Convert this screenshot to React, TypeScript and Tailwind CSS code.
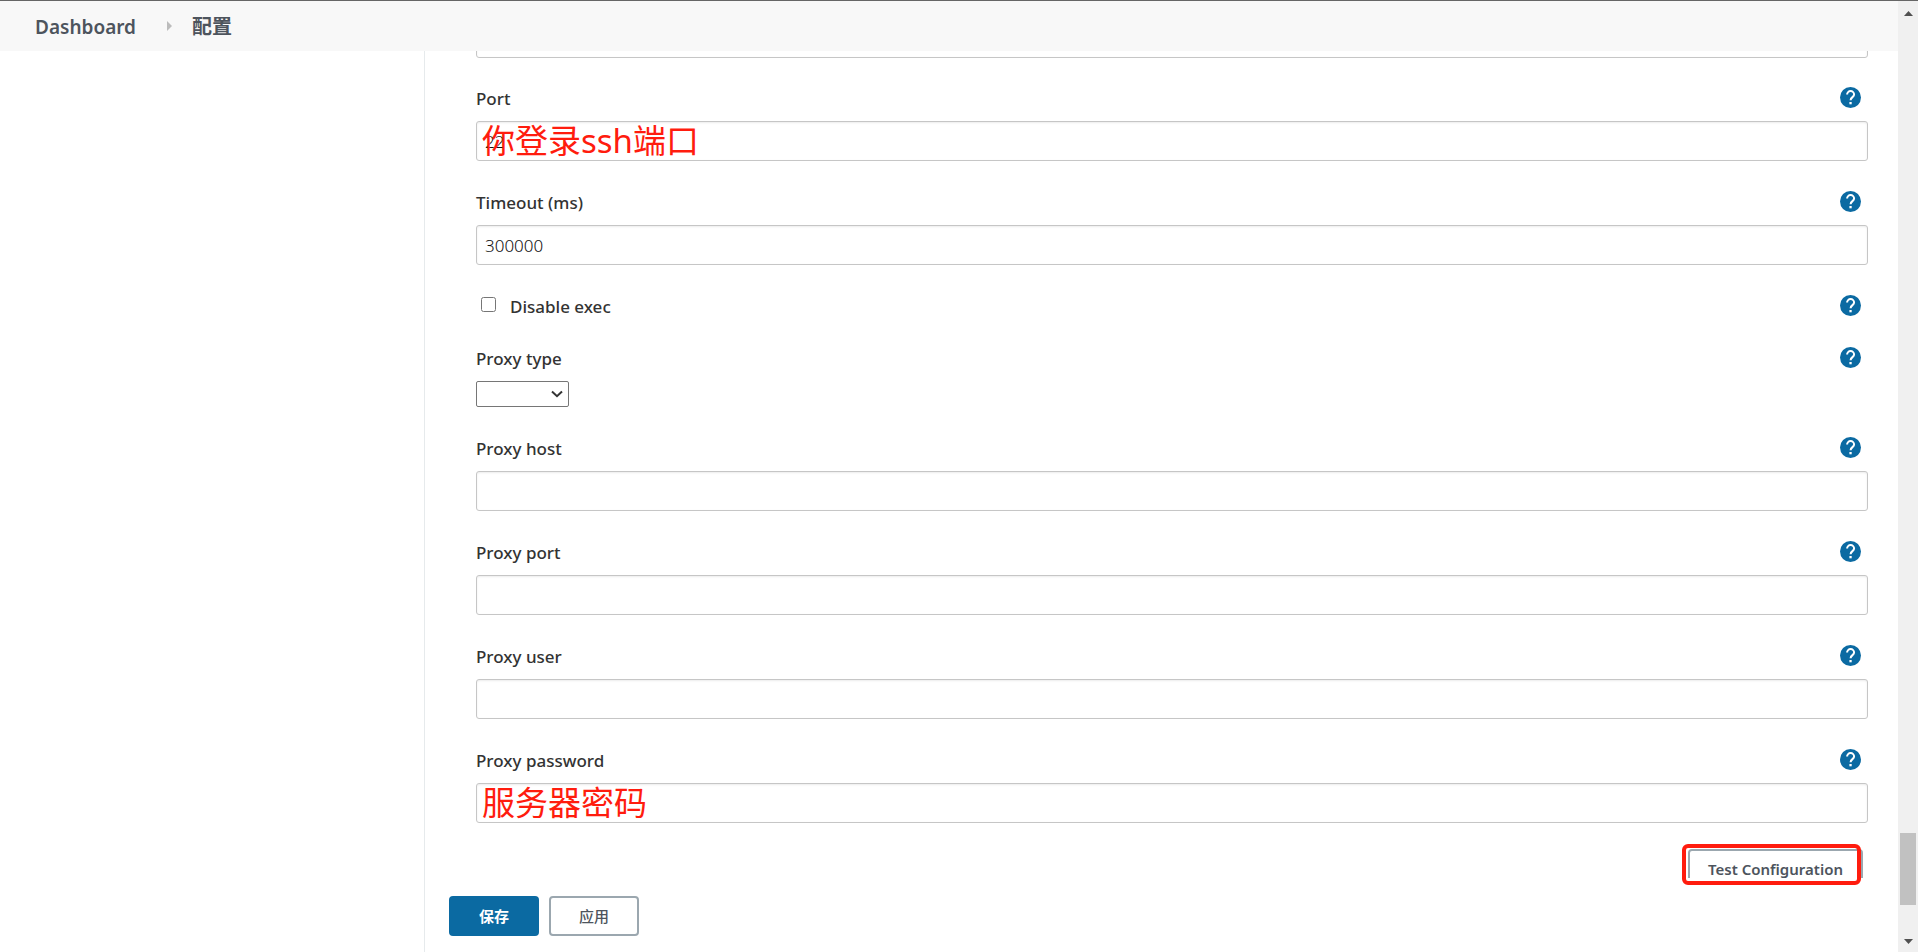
import type { ReactNode } from 'react';

const HelpButton = ({ label }: { label: string }) => (
  <button type="button" aria-label={`Help for feature: ${label}`} className="mr-[7px] h-[21px] w-[21px] shrink-0">
    <svg viewBox="0 0 21 21" className="h-full w-full">
      <circle cx="10.5" cy="10.5" r="10.5" fill="#0b6aa2" />
      <path
        d="M7.1 7.6a3.5 3.5 0 0 1 7 0c0 2.5-3.5 2.6-3.5 5.6"
        fill="none"
        stroke="#fff"
        strokeWidth="2"
      />
      <rect x="9.4" y="15" width="2.3" height="2.3" fill="#fff" />
    </svg>
  </button>
);

const inputClass =
  'block h-10 w-full rounded-[3px] border border-[#c6c6c6] bg-white px-2 text-[17px] font-light text-[#111] shadow-[inset_0_1px_2px_rgba(0,0,0,0.08)] outline-none';

const Field = ({ id, label, children }: { id: string; label: string; children: ReactNode }) => (
  <div className="mb-[30px]">
    <div className="mb-3 flex h-[22px] items-start justify-between">
      <label htmlFor={id} className="text-[17px] leading-6 font-medium text-[#333]">
        {label}
      </label>
      <HelpButton label={label} />
    </div>
    {children}
  </div>
);

type TextFieldProps = { id: string; label: string; value?: string; type?: string; note?: string };

const TextField = ({ id, label, value = '', type = 'text', note }: TextFieldProps) => (
  <Field id={id} label={label}>
    <div className="relative">
      <input id={id} type={type} defaultValue={value} className={inputClass} />
      {note && (
        <span className="pointer-events-none absolute inset-y-0 left-[6px] flex items-center text-[33px] leading-10 whitespace-nowrap text-[#ff1c0e]">
          {note}
        </span>
      )}
    </div>
  </Field>
);

const Breadcrumbs = () => (
  <header className="flex h-[51px] shrink-0 items-center border-t border-[#666] bg-[#f8f8f8] pt-[2px] pl-[35px] text-[19px] font-semibold text-[#4d545d]">
    <a href="#dashboard">Dashboard</a>
    <svg viewBox="0 0 5 10" className="mr-5 mb-[2px] ml-[31px] h-[10px] w-[5px]">
      <path d="M0 0l5 5-5 5z" fill="#bcbcbc" />
    </svg>
    <a href="#configure" className="text-xl">
      配置
    </a>
  </header>
);

const Scrollbar = () => (
  <div className="flex w-5 shrink-0 flex-col items-center border-t border-[#666] bg-[#f0f0f0]">
    <button type="button" aria-label="Scroll up" className="flex h-6 w-full items-center justify-center">
      <svg viewBox="0 0 9 5" className="h-[5px] w-[9px]">
        <path d="M4.5 0L9 5H0z" fill="#505050" />
      </svg>
    </button>
    <div className="flex w-full flex-1 flex-col justify-end px-[2px] pb-[25px]">
      <div className="h-[72px] bg-[#c1c1c1]" />
    </div>
    <button type="button" aria-label="Scroll down" className="flex h-[22px] w-full items-center justify-center">
      <svg viewBox="0 0 9 5" className="h-[5px] w-[9px]">
        <path d="M0 0h9L4.5 5z" fill="#505050" />
      </svg>
    </button>
  </div>
);

const App = () => {
  return (
    <div className="flex h-screen bg-white font-['Noto_Sans','Noto_Sans_CJK_SC',sans-serif]">
      <div className="flex min-w-0 flex-1 flex-col">
        <Breadcrumbs />
        <div className="flex min-h-0 flex-1">
          <aside className="w-[424px] shrink-0" />
          <form
            className="flex min-w-0 flex-1 flex-col border-l border-[#e6eaec]"
            onSubmit={(e) => e.preventDefault()}
          >
            <div className="relative min-h-0 flex-1">
              <div className="h-full overflow-hidden pr-[30px] pl-[51px]">
                {/* Field scrolled under the header */}
                <div className="mb-[29px] flex h-[7px] items-end overflow-hidden">
                  <input aria-label="Jump host" className={`${inputClass} shrink-0`} />
                </div>
                <TextField id="port" label="Port" value="22" note="你登录ssh端口" />
                <TextField id="timeout" label="Timeout (ms)" value="300000" />

                <div className="mb-[30px] flex h-[22px] items-start justify-between">
                  <label className="flex items-start text-[17px] leading-6 font-medium text-[#333]">
                    <input type="checkbox" className="mt-[2px] mr-[14px] ml-[5px] h-[15px] w-[15px]" />
                    Disable exec
                  </label>
                  <HelpButton label="Disable exec" />
                </div>

                <Field id="proxyType" label="Proxy type">
                  <div className="relative w-[93px]">
                    <select
                      id="proxyType"
                      className="block h-[26px] w-full appearance-none rounded-[2px] border border-[#767676] bg-white px-1 text-sm"
                    >
                      <option value=""></option>
                      <option value="http">http</option>
                      <option value="socks4">socks4</option>
                      <option value="socks5">socks5</option>
                    </select>
                    <svg
                      viewBox="0 0 12 8"
                      className="pointer-events-none absolute top-[9px] right-[6px] h-2 w-3"
                    >
                      <path d="M1 1.5l5 4.7 5-4.7" fill="none" stroke="#333" strokeWidth="2" />
                    </svg>
                  </div>
                </Field>

                <TextField id="proxyHost" label="Proxy host" />
                <TextField id="proxyPort" label="Proxy port" />
                <TextField id="proxyUser" label="Proxy user" />
                <TextField id="proxyPassword" label="Proxy password" type="password" note="服务器密码" />

                <div className="-mt-1 flex justify-end pr-[5px]">
                  <button
                    type="button"
                    className="h-10 w-[175px] rounded border-2 border-[#9ba7af] bg-white text-[15px] font-semibold text-[#4d545d]"
                  >
                    Test Configuration
                  </button>
                </div>
              </div>
              {/* Highlight around the test button */}
              <div className="pointer-events-none absolute right-[37px] -bottom-[7px] h-[41px] w-[179px] rounded-md border-4 border-[#ff1c0e]" />
            </div>

            <div className="flex shrink-0 gap-[10px] pt-[18px] pb-4 pl-6 text-[15px]">
              <button type="submit" className="h-10 w-[90px] rounded bg-[#0b6aa2] font-semibold text-white">
                保存
              </button>
              <button
                type="button"
                className="h-10 w-[90px] rounded border-2 border-[#9ba7af] bg-white font-medium text-[#4d545d]"
              >
                应用
              </button>
            </div>
          </form>
        </div>
      </div>
      <Scrollbar />
    </div>
  );
};

export default App;
